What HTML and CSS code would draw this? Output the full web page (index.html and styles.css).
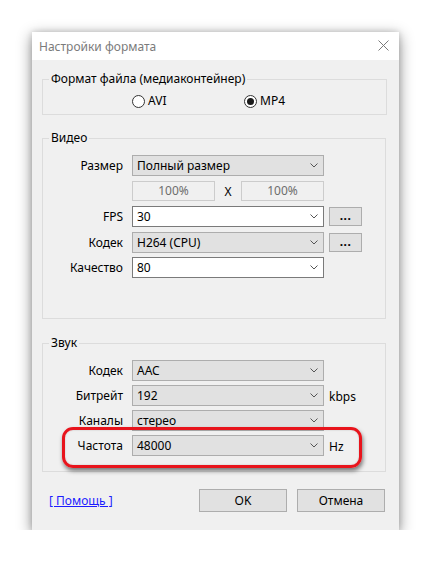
FILE: index.html
```html
<!DOCTYPE html>
<html lang="ru">
<head>
<meta charset="utf-8">
<title>Настройки формата</title>
<link rel="stylesheet" href="styles.css">
</head>
<body>
<div class="dialog">
  <div class="titlebar">
    <span class="title">Настройки формата</span>
    <svg class="close" width="11" height="11" viewBox="0 0 11 11"><path d="M0.5 0.5 L10.5 10.5 M10.5 0.5 L0.5 10.5" stroke="#7a7a7a" stroke-width="1" fill="none"/></svg>
  </div>
  <div class="body">
    <fieldset class="group g-format">
      <legend>Формат файла (медиаконтейнер)</legend>
      <div class="radios">
        <label class="radio"><span class="dot"></span>AVI</label>
        <label class="radio checked"><span class="dot"></span>MP4</label>
      </div>
    </fieldset>

    <fieldset class="group g-video">
      <legend>Видео</legend>
      <div class="form">
        <span class="lbl">Размер</span>
        <div class="select gray"><span>Полный размер</span><svg class="chev" width="8" height="5" viewBox="0 0 8 5"><path d="M0.5 0.5 L4 4 L7.5 0.5" stroke="#555" fill="none"/></svg></div>
        <span></span>

        <span></span>
        <div class="sizes"><span class="field">100%</span><span class="x">X</span><span class="field">100%</span></div>
        <span></span>

        <span class="lbl">FPS</span>
        <div class="select white"><span>30</span><svg class="chev" width="8" height="5" viewBox="0 0 8 5"><path d="M0.5 0.5 L4 4 L7.5 0.5" stroke="#555" fill="none"/></svg></div>
        <span class="more">...</span>

        <span class="lbl">Кодек</span>
        <div class="select gray"><span>H264 (CPU)</span><svg class="chev" width="8" height="5" viewBox="0 0 8 5"><path d="M0.5 0.5 L4 4 L7.5 0.5" stroke="#555" fill="none"/></svg></div>
        <span class="more">...</span>

        <span class="lbl">Качество</span>
        <div class="select white"><span>80</span><svg class="chev" width="8" height="5" viewBox="0 0 8 5"><path d="M0.5 0.5 L4 4 L7.5 0.5" stroke="#555" fill="none"/></svg></div>
        <span></span>
      </div>
    </fieldset>

    <fieldset class="group g-audio">
      <legend>Звук</legend>
      <div class="form audio">
        <span class="lbl">Кодек</span>
        <div class="select gray"><span>AAC</span><svg class="chev" width="8" height="5" viewBox="0 0 8 5"><path d="M0.5 0.5 L4 4 L7.5 0.5" stroke="#555" fill="none"/></svg></div>
        <span></span>

        <span class="lbl">Битрейт</span>
        <div class="select gray"><span>192</span><svg class="chev" width="8" height="5" viewBox="0 0 8 5"><path d="M0.5 0.5 L4 4 L7.5 0.5" stroke="#555" fill="none"/></svg></div>
        <span class="unit">kbps</span>

        <span class="lbl">Каналы</span>
        <div class="select gray"><span>стерео</span><svg class="chev" width="8" height="5" viewBox="0 0 8 5"><path d="M0.5 0.5 L4 4 L7.5 0.5" stroke="#555" fill="none"/></svg></div>
        <span></span>

        <span class="lbl">Частота</span>
        <div class="select gray"><span>48000</span><svg class="chev" width="8" height="5" viewBox="0 0 8 5"><path d="M0.5 0.5 L4 4 L7.5 0.5" stroke="#555" fill="none"/></svg></div>
        <span class="unit">Hz</span>
      </div>
      <div class="highlight"></div>
    </fieldset>

    <div class="footer">
      <a class="help" href="#">[ Помощь ]</a>
      <div class="buttons">
        <span class="btn">OK</span>
        <span class="btn">Отмена</span>
      </div>
    </div>
  </div>
</div>
</body>
</html>
```

FILE: styles.css
```css
* { box-sizing: border-box; }
html, body { margin: 0; padding: 0; background: #ffffff; }
body {
  padding: 32px 0 0 32px;
  font-family: "Noto Sans", "Open Sans", sans-serif;
  font-size: 12px;
  color: #000;
}
.dialog {
  width: 367px;
  height: 498px;
  background: #f0f0f0;
  box-shadow: 0 4px 14px rgba(0,0,0,0.45), 0 0 6px rgba(0,0,0,0.15);
  display: flex;
  flex-direction: column;
}
.titlebar {
  height: 28px;
  background: #ffffff;
  display: flex;
  align-items: center;
  justify-content: space-between;
  padding: 0 10px 0 7px;
}
.title { color: #7b7b7b; font-size: 12px; }
.close { display: block; margin-top: -1px; }
.body { padding-top: 11px; flex: 1; display: flex; flex-direction: column; }
.group {
  margin: 0 0 0 10px;
  padding: 0;
  border: 1px solid #dcdcdc;
  min-width: 0;
  position: relative;
}
.group legend {
  margin-left: 6px;
  padding: 0 2px;
  line-height: 16px;
  height: 16px;
}
.g-format { width: 345px; padding: 6px 0 5px 0; }
.g-video { width: 344px; margin-top: 15px; padding: 9px 0 40px 0; }
.g-audio { width: 344px; margin-top: 16px; padding: 9px 0 15px 0; }
.radios { display: flex; height: 16px; align-items: center; padding-left: 89px; }
.radio { display: flex; align-items: center; gap: 3px; width: 112px; line-height: 16px; }
.dot {
  width: 13px; height: 13px;
  border: 1px solid #333;
  border-radius: 50%;
  background: #fff;
  display: flex; align-items: center; justify-content: center;
}
.checked .dot::after {
  content: "";
  width: 7px; height: 7px; border-radius: 50%; background: #1a1a1a;
}
.form {
  display: grid;
  grid-template-columns: 80px 192px 40px;
  column-gap: 9px;
  row-gap: 4.5px;
  grid-auto-rows: 21px;
  align-items: center;
}
.form.audio { row-gap: 4px; }
.form > :nth-child(3n) { margin-left: -4px; }
.lbl { text-align: right; line-height: 21px; }
.select {
  height: 21px;
  border: 1px solid #adadad;
  display: flex;
  align-items: center;
  justify-content: space-between;
  padding: 0 5px 0 4px;
  line-height: 19px;
}
.select.gray { background: #e1e1e1; }
.select.white { background: #ffffff; border-color: #7a7a7a; }
.chev { display: block; }
.sizes { display: flex; align-items: center; justify-content: space-between; height: 21px; }
.field {
  width: 83px; height: 20px;
  border: 1px solid #cccccc;
  background: #f0f0f0;
  color: #6d6d6d;
  text-align: center;
  line-height: 18px;
}
.x { width: 12px; text-align: center; }
.more {
  width: 33px; height: 19px;
  border: 1px solid #adadad;
  background: #e1e1e1;
  text-align: center;
  line-height: 16px;
  font-weight: bold;
  letter-spacing: 0.5px;
}
.unit { line-height: 21px; padding-top: 2px; }
.highlight {
  position: absolute;
  left: 19px;
  top: 76px;
  width: 300px;
  height: 41px;
  border: 3px solid #e8141c;
  border-radius: 11px;
  box-shadow: 1px 3px 4px rgba(0,0,0,0.5), inset 0 0 2px rgba(0,0,0,0.2);
}
.footer {
  margin-top: 17px;
  display: flex;
  align-items: center;
  justify-content: space-between;
  padding: 0 14px 0 17px;
  height: 23px;
}
.help { color: #1c1cff; text-decoration: underline; }
.buttons { display: flex; gap: 10px; }
.btn {
  width: 88px; height: 23px;
  border: 1px solid #adadad;
  background: #e1e1e1;
  text-align: center;
  line-height: 21px;
}
```
